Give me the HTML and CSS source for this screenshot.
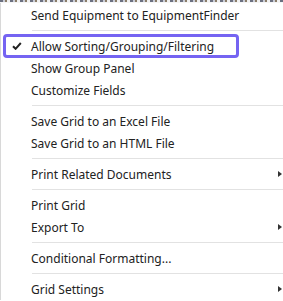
FILE: index.html
```html
<!DOCTYPE html>
<html lang="en">
<head>
    <meta charset="UTF-8">
    <title>grid menu</title>
    <link rel="stylesheet" href="styles.css">
</head>
<body>
    <div class="gridHead"></div>
    <div class="menu">
        <div class="item"><span class="icon"></span><span class="label">Send Equipment to EquipmentFinder</span></div>
        <div class="sep"></div>
        <div class="item marked">
            <span class="icon">
                <svg width="10" height="8" viewBox="0 0 10 8"><path d="M1 4.2 L3.6 6.8 L8.8 1" fill="none" stroke="#222" stroke-width="2"/></svg>
            </span>
            <span class="label">Allow Sorting/Grouping/Filtering</span>
        </div>
        <div class="item"><span class="icon"></span><span class="label">Show Group Panel</span></div>
        <div class="item"><span class="icon"></span><span class="label">Customize Fields</span></div>
        <div class="sep"></div>
        <div class="item"><span class="icon"></span><span class="label">Save Grid to an Excel File</span></div>
        <div class="item"><span class="icon"></span><span class="label">Save Grid to an HTML File</span></div>
        <div class="sep"></div>
        <div class="item"><span class="icon"></span><span class="label">Print Related Documents</span><span class="sub"></span></div>
        <div class="sep"></div>
        <div class="item"><span class="icon"></span><span class="label">Print Grid</span></div>
        <div class="item"><span class="icon"></span><span class="label">Export To</span><span class="sub"></span></div>
        <div class="sep"></div>
        <div class="item"><span class="icon"></span><span class="label">Conditional Formatting...</span></div>
        <div class="sep"></div>
        <div class="item"><span class="icon"></span><span class="label">Grid Settings</span><span class="sub"></span></div>
    </div>
</body>
</html>
```
FILE: styles.css
```css
body {
    margin: 0;
    background: #fff;
    font-family: "Noto Sans", "Open Sans", sans-serif;
    overflow: hidden;
}
/* bits of the grid header peeking out above the menu */
.gridHead {
    height: 3px;
    background:
        repeating-linear-gradient(90deg, #6b7080 0 3px, #c9ccd6 3px 5px, #8a7c68 5px 7px, #f2f2f2 7px 10px) 0 0 / 100% 2px no-repeat,
        #f6f6f6;
}
.menu {
    border-left: 1px solid #d8d8d8;
    padding-top: 1px;
    color: #222;
    font-size: 12px;
}
.item {
    position: relative;
    display: flex;
    align-items: center;
    height: 22px;
}
.icon {
    width: 30px;
    display: flex;
    justify-content: center;
    padding-left: 2px;
    box-sizing: border-box;
}
.label {
    flex: 1;
    white-space: nowrap;
}
.sub {
    width: 0;
    height: 0;
    border-top: 3.5px solid transparent;
    border-bottom: 3.5px solid transparent;
    border-left: 4px solid #333;
    margin-right: 1px;
}
.sep {
    height: 1px;
    background: #e2e2e2;
    margin: 4px 0 4px 31px;
}
.marked::after {
    content: "";
    position: absolute;
    left: 2px;
    top: -1px;
    width: 236px;
    bottom: -1px;
    border: 3px solid #7564f2;
    border-radius: 4px;
    box-sizing: border-box;
}
```
